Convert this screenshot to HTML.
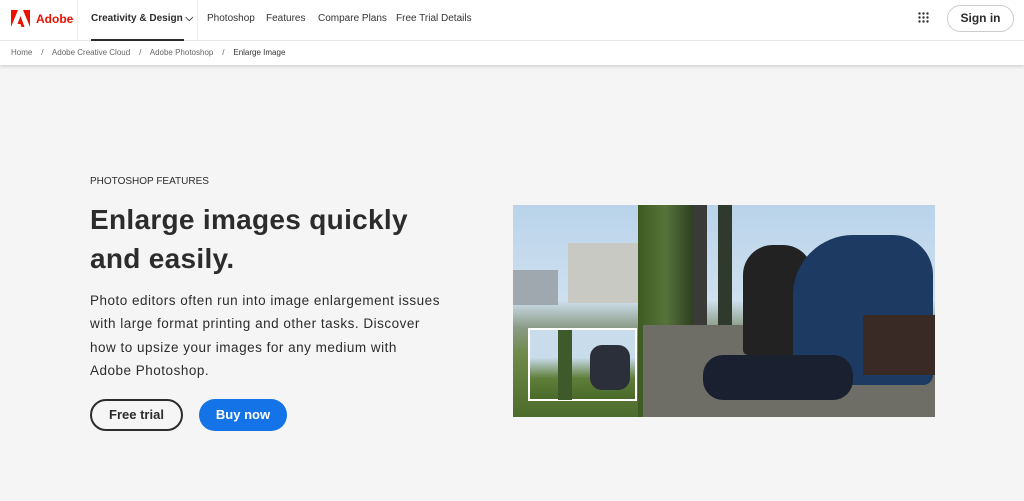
<!DOCTYPE html>
<html><head><style>
*{margin:0;padding:0;box-sizing:border-box}
body{width:1024px;height:501px;overflow:hidden;background:#f5f5f5;font-family:"Liberation Sans",sans-serif;position:relative}
.hdr{position:absolute;top:0;left:0;width:1024px;height:41px;background:#fff;border-bottom:1px solid #e8e8e8}
.bc{position:absolute;top:41px;left:0;width:1024px;height:24px;background:#fff;box-shadow:0 2px 3px rgba(0,0,0,.12);font-size:8px;color:#666}
.t{position:absolute;white-space:nowrap}
.nav{font-size:10px;color:#333;top:13px}
.btn{position:absolute;border-radius:16px;font-weight:bold;font-size:13px;text-align:center;line-height:30px}
</style></head><body>
<div class="hdr">
<svg style="position:absolute;left:11px;top:10px" width="19" height="17" viewBox="0 0 19 17"><path d="M0 0h7L0 17z M12 0h7v17z" fill="#eb1000"/><path d="M9.5 6l4 11h-3l-1-3h-3z" fill="#eb1000"/></svg>
<div class="t" style="left:36px;top:12px;font-size:12px;font-weight:bold;color:#eb1000">Adobe</div>
<div style="position:absolute;left:77px;top:0;width:1px;height:40px;background:#eee"></div>
<div class="t nav" style="left:91px;color:#2c2c2c;font-weight:bold">Creativity &amp; Design ⌵</div>
<div style="position:absolute;left:91px;top:39px;width:93px;height:2px;background:#2c2c2c"></div>
<div style="position:absolute;left:197px;top:0;width:1px;height:40px;background:#eee"></div>
<div class="t nav" style="left:207px">Photoshop</div>
<div class="t nav" style="left:266px">Features</div>
<div class="t nav" style="left:318px">Compare Plans</div>
<div class="t nav" style="left:396px">Free Trial Details</div>
<svg style="position:absolute;left:918px;top:12px" width="11" height="11"><g fill="#333"><circle cx="1.5" cy="1.5" r="1.2"/><circle cx="5.5" cy="1.5" r="1.2"/><circle cx="9.5" cy="1.5" r="1.2"/><circle cx="1.5" cy="5.5" r="1.2"/><circle cx="5.5" cy="5.5" r="1.2"/><circle cx="9.5" cy="5.5" r="1.2"/><circle cx="1.5" cy="9.5" r="1.2"/><circle cx="5.5" cy="9.5" r="1.2"/><circle cx="9.5" cy="9.5" r="1.2"/></g></svg>
<div style="position:absolute;left:947px;top:5px;width:67px;height:27px;border:1px solid #ccc;border-radius:14px;text-align:center;line-height:25px;font-size:12px;font-weight:bold;color:#2c2c2c">Sign in</div>
</div>
<div class="bc">
<div class="t" style="left:11px;top:7px">Home &nbsp;&nbsp;&nbsp;/&nbsp;&nbsp;&nbsp; Adobe Creative Cloud &nbsp;&nbsp;&nbsp;/&nbsp;&nbsp;&nbsp; Adobe Photoshop &nbsp;&nbsp;&nbsp;/&nbsp;&nbsp;&nbsp; <span style="color:#333">Enlarge Image</span></div>
</div>
<div class="t" style="left:90px;top:176px;font-size:10px;color:#2c2c2c">PHOTOSHOP FEATURES</div>
<div class="t" style="left:90px;top:200px;font-size:28px;font-weight:bold;color:#2c2c2c;line-height:39px;letter-spacing:0.3px">Enlarge images quickly<br>and easily.</div>
<div class="t" style="left:90px;top:289px;font-size:13.5px;color:#2c2c2c;line-height:23.3px;letter-spacing:0.5px">Photo editors often run into image enlargement issues<br>with large format printing and other tasks. Discover<br>how to upsize your images for any medium with<br>Adobe Photoshop.</div>
<div class="btn" style="left:90px;top:399px;width:93px;height:32px;border:2px solid #2c2c2c;color:#2c2c2c;line-height:28px">Free trial</div>
<div class="btn" style="left:199px;top:399px;width:88px;height:32px;background:#1473e6;color:#fff;line-height:32px">Buy now</div>
<div style="position:absolute;left:513px;top:205px;width:422px;height:212px;overflow:hidden;background:linear-gradient(#b9d3ea 0%,#cfe0ef 45%,#8a9a86 58%,#6f8a4a 70%,#4d6b2c 100%)">
<div style="position:absolute;left:55px;top:38px;width:70px;height:60px;background:#c9c9c4"></div>
<div style="position:absolute;left:0;top:65px;width:45px;height:35px;background:#9fa8ae"></div>
<div style="position:absolute;left:125px;top:0;width:55px;height:212px;background:linear-gradient(90deg,#3d5a22,#56743a,#2e3f22)"></div>
<div style="position:absolute;left:180px;top:0;width:14px;height:160px;background:#3a3a38"></div>
<div style="position:absolute;left:205px;top:0;width:14px;height:160px;background:#2f3a2c"></div>
<div style="position:absolute;left:130px;top:120px;width:292px;height:92px;background:#6e6d66"></div>
<div style="position:absolute;left:230px;top:40px;width:70px;height:110px;background:#222;border-radius:30px 30px 5px 5px"></div>
<div style="position:absolute;left:280px;top:30px;width:140px;height:150px;background:#1d3a63;border-radius:60px 40px 10px 10px"></div>
<div style="position:absolute;left:190px;top:150px;width:150px;height:45px;background:#1a2030;border-radius:20px"></div>
<div style="position:absolute;left:350px;top:110px;width:72px;height:60px;background:#3a2a26"></div>
<div style="position:absolute;left:15px;top:123px;width:109px;height:73px;border:2px solid #fff;background:linear-gradient(#c9dcec 40%,#5f7e3a 70%,#4a6a2a)">
<div style="position:absolute;left:60px;top:15px;width:40px;height:45px;background:#2a2f3a;border-radius:12px"></div>
<div style="position:absolute;left:28px;top:0;width:14px;height:70px;background:#3e5a2a"></div></div>
</div>
</body></html>
